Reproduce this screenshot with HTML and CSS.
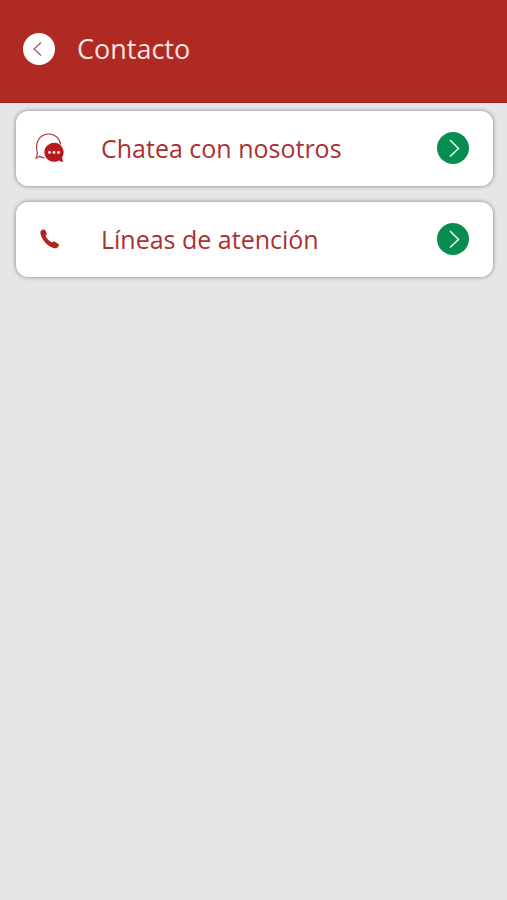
FILE: index.html
```html
<!DOCTYPE html>
<html lang="es">
<head>
  <meta charset="UTF-8">
  <meta name="viewport" content="width=device-width, initial-scale=1">
  <title>Contacto</title>
  <link rel="stylesheet" href="styles.css">
</head>
<body>
  <header class="header">
    <button type="button" class="back" aria-label="Volver">
      <svg width="32" height="32" viewBox="0 0 32 32">
        <path d="M18 9.500L11 16L18 22.500" fill="none" stroke="#94595c" stroke-width="1.200"/>
      </svg>
    </button>
    <h1>Contacto</h1>
  </header>
  <main class="options">
    <a href="#chat" class="option">
      <svg class="icon" width="30" height="30" viewBox="0 0 30 30">
        <path d="M9.500 24.800C7.400 24.600 5.800 24 4.800 23.200C3.600 24.300 2.200 24.900 1 25C2 23 2.500 21.500 2.300 19.500C1.700 17.500 1.500 15 1.700 12.500C2.200 5.500 7.500 1 13.500 1C20 1 24.800 5.200 25.600 11.500" fill="none" stroke="#b2363a" stroke-width="1.200"/>
        <path d="M19.200 9.800A9.500 9.500 0 1 0 23.800 27.400C25.200 28.300 26.800 28.800 28.400 28.600C27.500 27.400 27.100 26 27.200 24.200A9.500 9.500 0 0 0 19.200 9.800Z" fill="#b9191d"/>
        <g fill="#fff">
          <circle cx="14.500" cy="19.400" r="1.400"/>
          <circle cx="19" cy="19.400" r="1.400"/>
          <circle cx="23.500" cy="19.400" r="1.400"/>
        </g>
      </svg>
      <span class="label">Chatea con nosotros</span>
      <svg class="arrow" width="32" height="32" viewBox="0 0 32 32">
        <circle cx="16" cy="16" r="16"/>
        <path d="M13 8L21.500 16.500L13 24.500"/>
      </svg>
    </a>
    <a href="#lineas" class="option">
      <svg class="icon" width="30" height="30" viewBox="0 0 30 30">
        <path d="M6.500 6.200C8 5 9.500 5.300 10.500 6.800L11.500 8.800C12 10.200 11.500 11 10.500 11.800C11.800 14.800 14 17 17 18.500C18 17.600 19 17.300 20.200 18L23.200 19.800C24.300 20.700 24.200 21.800 23 23C21.500 24.500 19.800 24.700 17.800 23.800C11.500 21 7.500 16.500 5.700 10.500C5.200 8.600 5.300 7.200 6.500 6.200Z" fill="#b5201f"/>
      </svg>
      <span class="label">Líneas de atención</span>
      <svg class="arrow" width="32" height="32" viewBox="0 0 32 32">
        <circle cx="16" cy="16" r="16"/>
        <path d="M13 8L21.500 16.500L13 24.500"/>
      </svg>
    </a>
  </main>
</body>
</html>
```
FILE: styles.css
```css
body {
  font-family: "Open Sans", "Noto Sans", sans-serif;
  margin: 0;
  background-color: #e6e6e6;
}

.header {
  display: flex;
  align-items: center;
  gap: 22px;
  padding: 30px 23px 34px;
  background-color: #b02a24;
  border-bottom: 1px solid #a02620;
  box-shadow: 0 1px 1px #f0dddb;
}

.header h1 {
  margin: 0;
  font-size: 27px;
  font-weight: 400;
  line-height: 38px;
  color: #fbe3df;
}

.back {
  width: 32px;
  height: 32px;
  padding: 0;
  border: none;
  border-radius: 50%;
  background-color: #fff;
  cursor: pointer;
}

.back svg {
  display: block;
}

.options {
  display: flex;
  flex-direction: column;
  gap: 16px;
  padding: 8px 14px 16px 16px;
}

.option {
  display: flex;
  align-items: center;
  padding: 18px 24px 19px 19px;
  border-radius: 12px;
  background-color: #fff;
  box-shadow: 0 0 4px rgba(0, 0, 0, 0.45);
  color: #ab3031;
  text-decoration: none;
}

.icon {
  flex: none;
  margin-right: 36px;
}

.label {
  flex: 1;
  font-size: 25px;
  line-height: 38px;
}

.arrow {
  flex: none;
}

.arrow circle {
  fill: #078d50;
}

.arrow path {
  fill: none;
  stroke: #e4f5ec;
  stroke-width: 1.6;
}
```
